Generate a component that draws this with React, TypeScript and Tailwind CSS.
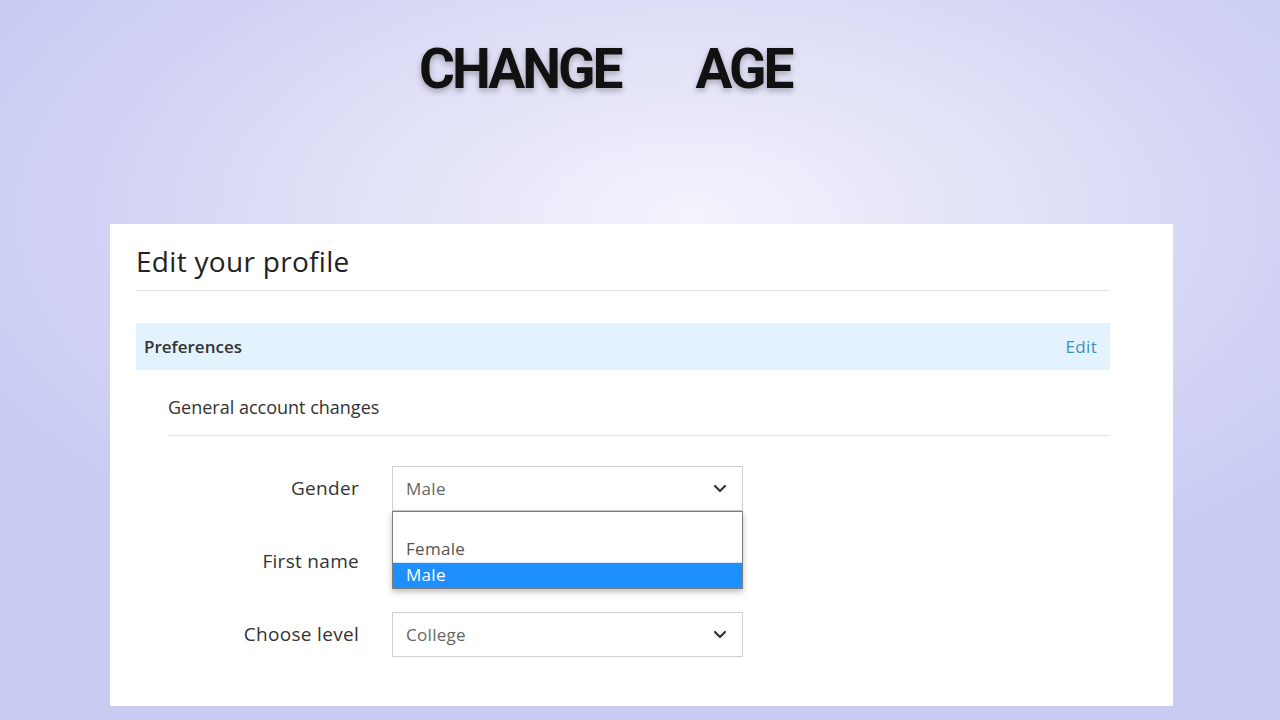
import { useState } from "react";

const Chevron = () => (
  <svg width="14" height="9" viewBox="0 0 14 9" className="shrink-0">
    <polyline points="2,2 7,7 12,2" fill="none" stroke="#333" strokeWidth="2.2" strokeLinecap="round" strokeLinejoin="round" />
  </svg>
);

function Select({ value, open }: { value: string; open?: boolean }) {
  return (
    <div className="relative w-[351px]">
      <div className="flex h-[45px] items-center justify-between border border-[#cfcfcf] bg-white pl-[13px] pr-[15px] text-[17px] tracking-[0.3px] text-[#666]">
        <span>{value}</span>
        <Chevron />
      </div>
      {open && (
        <div className="absolute left-0 top-full z-10 w-full border border-[#7d7d7d] bg-white text-[17px] tracking-[0.3px] shadow-[0_3px_6px_rgba(0,0,0,0.25)]">
          <div className="h-[24px]" />
          <div className="flex h-[26px] items-center pl-[13px] text-[#555]">Female</div>
          <div className="flex h-[26px] items-center border-t border-[#cfe6ff] bg-[#1e8fff] pb-[2px] pl-[13px] text-white">Male</div>
        </div>
      )}
    </div>
  );
}

export default function App() {
  const [gender] = useState("Male");
  return (
    <div
      className="h-[720px] w-[1280px] overflow-hidden bg-[radial-gradient(ellipse_60%_55%_at_54%_30%,#f3f3fd_0%,#dcdcf6_55%,#c9cbf3_100%)]"
      style={{ fontFamily: "'Open Sans', Lato, sans-serif" }}
    >
      <div
        className="flex pl-[419px] pt-[42px] text-[55px] font-bold leading-none tracking-[-3px] text-[#111] [text-shadow:0_3px_6px_rgba(0,0,0,0.28)]"
        style={{ fontFamily: "Roboto, 'Liberation Sans', sans-serif" }}
      >
        <span>CHANGE</span>
        <span className="ml-[75px]">AGE</span>
      </div>

      <div className="ml-[110px] mt-[127px] h-[482px] w-[1063px] bg-white pl-[26px] pr-[63px] pt-[19px]">
        <h1 className="border-b border-[#e2e2e2] pb-[11px] text-[28px] font-normal leading-[36px] tracking-[0.3px] text-[#222]">
          Edit your profile
        </h1>

        <div className="mt-[32px] flex h-[47px] items-center justify-between bg-[#e2f3fd] pl-2 pr-[13px] text-[17px]">
          <span className="font-semibold text-[#333]">Preferences</span>
          <span className="tracking-[0.3px] text-[#3d8fbd]">Edit</span>
        </div>

        <div className="ml-[32px]">
          <div className="border-b border-[#e2e2e2] pb-[17px] pt-[26px] text-[18px] font-medium leading-[22px] text-[#333]">
            General account changes
          </div>

          <div className="mt-[30px] grid grid-cols-[191px_351px] items-center gap-x-[33px] gap-y-[28px] text-[19px] tracking-[0.3px] text-[#333]">
            <span className="text-right">Gender</span>
            <Select value={gender} open />
            <span className="text-right">First name</span>
            <div className="h-[45px] border border-[#cfcfcf]" />
            <span className="text-right">Choose level</span>
            <Select value="College" />
          </div>
        </div>
      </div>
    </div>
  );
}
